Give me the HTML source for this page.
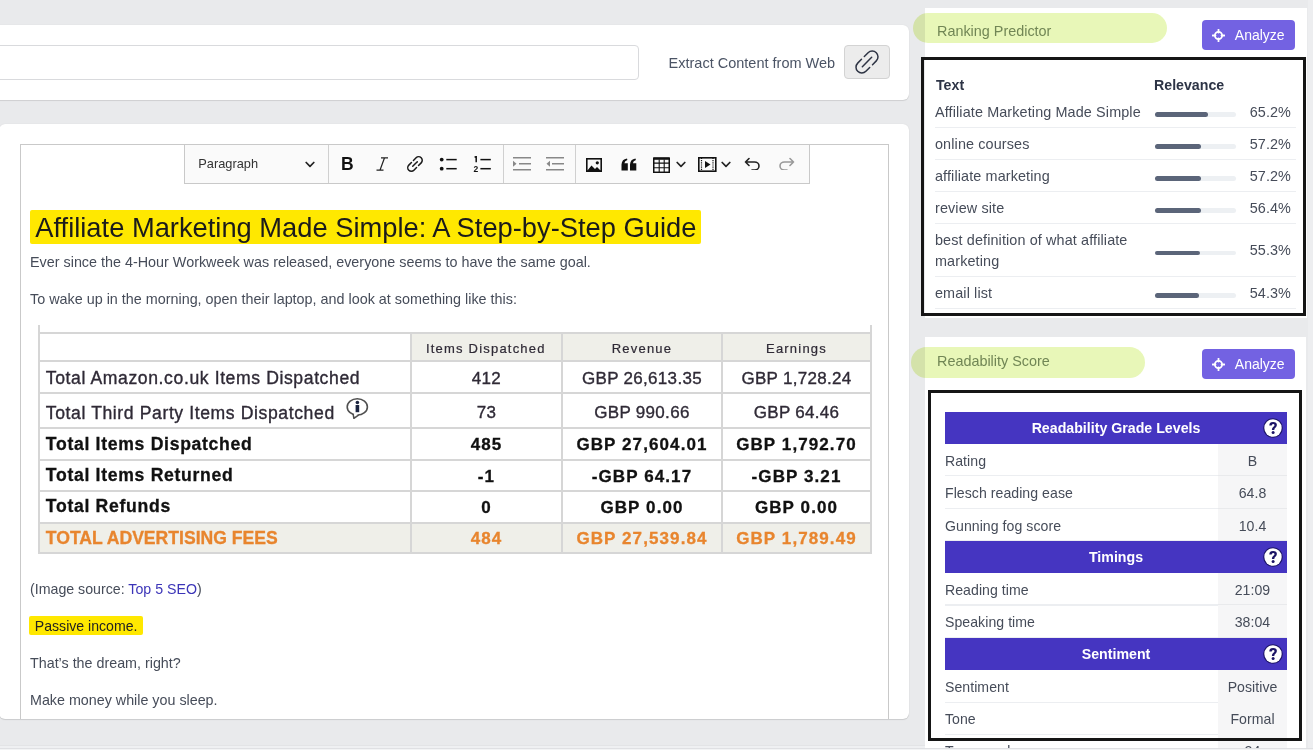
<!DOCTYPE html>
<html><head><meta charset="utf-8"><style>
html,body{margin:0;padding:0;}
body{width:1313px;height:750px;overflow:hidden;position:relative;background:#e9eaec;font-family:"Liberation Sans", sans-serif;}
.t{position:absolute;white-space:nowrap;}
.r{position:absolute;}
</style></head><body>
<div class="r" style="left:-10px;top:25px;width:918.8px;height:75px;background:#fff;border-radius:6px;box-shadow:0 0 1px rgba(0,0,0,.12),0 1px 1px rgba(0,0,0,.10);"></div>
<div class="r" style="left:-10px;top:45px;width:648.6px;height:34.8px;border:1px solid #d9dadd;border-radius:4px;box-sizing:border-box;background:#fff;"></div>
<div class="t" style="left:668.60px;top:56.33px;font-size:14.5px;line-height:14.5px;color:#4b5465;font-weight:400;">Extract Content from Web</div>
<div class="r" style="left:844px;top:45px;width:45.5px;height:33.5px;background:#ececec;border:1px solid #d3d3d3;border-radius:4px;box-sizing:border-box;"></div>
<svg class="r" style="left:854px;top:48.9px;" width="26" height="26" viewBox="0 0 26 26"><g transform="rotate(45 13 13)" fill="none" stroke="#2e3444" stroke-width="1.5" stroke-linecap="round"><path d="M7.2 11 V5.65 A5.8 5.8 0 0 1 18.8 5.65 V11"/><path d="M7.2 15 V20.35 A5.8 5.8 0 0 0 18.8 20.35 V15"/><path d="M13 6.4 V19.6"/></g></svg>
<div class="r" style="left:-1.5px;top:124px;width:910.3px;height:595px;background:#fff;border-radius:6px;box-shadow:0 0 1px rgba(0,0,0,.12),0 1px 1px rgba(0,0,0,.12);"></div>
<div class="r" style="left:20px;top:144px;width:869px;height:575px;border:1px solid #c9c9c9;border-bottom:none;box-sizing:border-box;"></div>
<div class="r" style="left:184px;top:144px;width:626px;height:39.5px;background:#fafafa;border:1px solid #c9c9c9;box-sizing:border-box;"></div>
<div class="r" style="left:328px;top:145px;width:1px;height:38px;background:#d0d0d0;"></div>
<div class="r" style="left:502.5px;top:145px;width:1px;height:38px;background:#d0d0d0;"></div>
<div class="r" style="left:574.5px;top:145px;width:1px;height:38px;background:#d0d0d0;"></div>
<div class="t" style="left:198.30px;top:157.66px;font-size:12.8px;line-height:12.8px;color:#333;font-weight:400;">Paragraph</div>
<svg class="r" style="left:305px;top:161px;" width="10" height="7" viewBox="0 0 10 7"><path d="M1.2 1.5 L5 5.3 L8.8 1.5" fill="none" stroke="#222" stroke-width="1.7" stroke-linecap="round" stroke-linejoin="round"/></svg>
<div class="t" style="left:341.00px;top:155.69px;font-size:17.5px;line-height:17.5px;color:#111;font-weight:700;">B</div>
<svg class="r" style="left:374.5px;top:157px;" width="14" height="14" viewBox="0 0 14 14"><path d="M6 0.9 H13 M1.5 13.1 H8.5 M9.5 0.9 L5 13.1" fill="none" stroke="#222" stroke-width="1.3"/></svg>
<svg class="r" style="left:405px;top:153.8px;" width="20" height="20" viewBox="0 0 20 20"><g transform="rotate(45 10 10)" fill="none" stroke="#1a1a1a" stroke-width="1.5" stroke-linecap="round"><path d="M6.4 8.6 V4.85 A3.6 3.6 0 0 1 13.6 4.85 V8.6"/><path d="M6.4 11.4 V15.15 A3.6 3.6 0 0 0 13.6 15.15 V11.4"/><path d="M10 6.8 V13.2"/></g></svg>
<svg class="r" style="left:439px;top:157px;" width="19" height="15" viewBox="0 0 19 15"><circle cx="2.7" cy="2.6" r="1.9" fill="#111"/><circle cx="2.7" cy="11.7" r="1.9" fill="#111"/><rect x="7.3" y="1.85" width="10.4" height="1.5" fill="#111"/><rect x="7.3" y="10.95" width="10.4" height="1.5" fill="#111"/></svg>
<svg class="r" style="left:473px;top:156px;" width="19" height="17" viewBox="0 0 19 17"><path d="M1.6 1.2 L3.2 0.6 V6.2" fill="none" stroke="#111" stroke-width="1.5"/><text x="0.6" y="16" font-family="Liberation Sans" font-size="8.5" font-weight="700" fill="#111">2</text><rect x="7.4" y="2.85" width="10.4" height="1.5" fill="#111"/><rect x="7.4" y="11.95" width="10.4" height="1.5" fill="#111"/></svg>
<svg class="r" style="left:513px;top:157px;" width="18" height="14" viewBox="0 0 18 14"><g fill="#888"><rect x="0" y="0" width="18" height="1.5"/><rect x="6" y="6" width="12" height="1.5"/><rect x="0" y="12" width="18" height="1.5"/><path d="M0 3.7 L3.5 6.75 L0 9.8Z"/></g></svg>
<svg class="r" style="left:546px;top:157px;" width="18" height="14" viewBox="0 0 18 14"><g fill="#888"><rect x="0" y="0" width="18" height="1.5"/><rect x="6" y="6" width="12" height="1.5"/><rect x="0" y="12" width="18" height="1.5"/><path d="M4 3.7 L0.5 6.75 L4 9.8Z"/></g></svg>
<svg class="r" style="left:586px;top:157.5px;" width="16" height="14" viewBox="0 0 16 14"><rect x="0.8" y="0.8" width="14.4" height="12.4" fill="none" stroke="#111" stroke-width="1.6"/><path d="M1 13 L5.5 7.5 L9 11 L11 9 L15 13Z" fill="#111"/><circle cx="11.3" cy="4.8" r="1.6" fill="#111"/></svg>
<svg class="r" style="left:620.5px;top:157.5px;" width="16" height="13" viewBox="0 0 16 13"><g fill="#111"><path d="M0.5 6.5 Q0.8 1.2 6 0.5 L6.4 2 Q3.6 2.8 3.4 5.2 H6.8 V12.5 H0.5Z"/><path d="M9 6.5 Q9.3 1.2 14.5 0.5 L14.9 2 Q12.1 2.8 11.9 5.2 H15.3 V12.5 H9Z"/></g></svg>
<svg class="r" style="left:652.5px;top:156.5px;" width="17" height="16" viewBox="0 0 17 16"><g fill="none" stroke="#111"><rect x="0.75" y="1.2" width="15.5" height="14.1" stroke-width="1.5"/><path d="M0.6 1.6 H16.4" stroke-width="2.4"/><path d="M0.6 6.1 H16.4 M0.6 10.7 H16.4 M6.2 2.5 V15.2 M11.2 2.5 V15.2" stroke-width="1.1"/></g></svg>
<svg class="r" style="left:675.5px;top:161px;" width="10" height="7" viewBox="0 0 10 7"><path d="M1.2 1.5 L5 5.3 L8.8 1.5" fill="none" stroke="#222" stroke-width="1.7" stroke-linecap="round" stroke-linejoin="round"/></svg>
<svg class="r" style="left:697.5px;top:156.5px;" width="19" height="15" viewBox="0 0 19 15"><rect x="0.8" y="0.8" width="17" height="13.4" fill="none" stroke="#111" stroke-width="1.6"/><path d="M3.5 0.8 V14.2 M15 0.8 V14.2" stroke="#111" stroke-width="1.2" stroke-dasharray="1.2 1"/><path d="M7 4 L12.5 7.5 L7 11Z" fill="#111"/></svg>
<svg class="r" style="left:720.5px;top:161px;" width="10" height="7" viewBox="0 0 10 7"><path d="M1.2 1.5 L5 5.3 L8.8 1.5" fill="none" stroke="#222" stroke-width="1.7" stroke-linecap="round" stroke-linejoin="round"/></svg>
<svg class="r" style="left:744px;top:157px;" width="17" height="13" viewBox="0 0 17 13"><path d="M5 1.5 L1.5 5 L5 8.5 M1.5 5 H10.5 a4.5 4 0 0 1 0 8 H8" fill="none" stroke="#222" stroke-width="1.6" stroke-linecap="round" stroke-linejoin="round"/></svg>
<svg class="r" style="left:777.5px;top:157px;" width="17" height="13" viewBox="0 0 17 13"><path d="M12 1.5 L15.5 5 L12 8.5 M15.5 5 H6.5 a4.5 4 0 0 0 0 8 H9" fill="none" stroke="#999" stroke-width="1.6" stroke-linecap="round" stroke-linejoin="round"/></svg>
<div class="r" style="left:29.5px;top:209.5px;width:671px;height:34px;background:#ffe800;border-radius:2px;"></div>
<div class="t" style="left:35.30px;top:213.99px;font-size:27.3px;line-height:27.3px;color:#1b1b1b;font-weight:400;">Affiliate Marketing Made Simple: A Step-by-Step Guide</div>
<div class="t" style="left:30.00px;top:255.34px;font-size:14.36px;line-height:14.36px;color:#464c59;font-weight:400;">Ever since the 4-Hour Workweek was released, everyone seems to have the same goal.</div>
<div class="t" style="left:30.00px;top:292.14px;font-size:14.36px;line-height:14.36px;color:#464c59;font-weight:400;">To wake up in the morning, open their laptop, and look at something like this:</div>
<div class="r" style="left:411px;top:333px;width:460px;height:28px;background:#efefe9;"></div>
<div class="r" style="left:39px;top:523px;width:832px;height:30px;background:#efefe9;"></div>
<div class="r" style="left:39px;top:332px;width:833px;height:2px;background:#d6d6d6;"></div>
<div class="r" style="left:39px;top:360px;width:833px;height:2px;background:#d6d6d6;"></div>
<div class="r" style="left:39px;top:392px;width:833px;height:2px;background:#d6d6d6;"></div>
<div class="r" style="left:39px;top:427px;width:833px;height:2px;background:#d6d6d6;"></div>
<div class="r" style="left:39px;top:459px;width:833px;height:2px;background:#d6d6d6;"></div>
<div class="r" style="left:39px;top:490px;width:833px;height:2px;background:#d6d6d6;"></div>
<div class="r" style="left:39px;top:522px;width:833px;height:2px;background:#d6d6d6;"></div>
<div class="r" style="left:39px;top:552px;width:833px;height:2px;background:#d6d6d6;"></div>
<div class="r" style="left:38px;top:333px;width:2px;height:221px;background:#d6d6d6;"></div>
<div class="r" style="left:410px;top:333px;width:2px;height:221px;background:#d6d6d6;"></div>
<div class="r" style="left:561px;top:333px;width:2px;height:221px;background:#d6d6d6;"></div>
<div class="r" style="left:721px;top:333px;width:2px;height:221px;background:#d6d6d6;"></div>
<div class="r" style="left:870px;top:333px;width:2px;height:221px;background:#d6d6d6;"></div>
<div class="r" style="left:38px;top:325px;width:2px;height:9px;background:#d6d6d6;"></div>
<div class="r" style="left:870px;top:325px;width:2px;height:9px;background:#d6d6d6;"></div>
<div class="t" style="left:426.00px;top:341.70px;font-size:13px;line-height:13px;color:#2f2a36;font-weight:400;letter-spacing:1.2px;-webkit-text-stroke:0.2px #2f2a36;">Items Dispatched</div>
<div class="t" style="left:562.00px;top:341.70px;font-size:13px;line-height:13px;color:#2f2a36;font-weight:400;letter-spacing:1.2px;width:160px;text-align:center;-webkit-text-stroke:0.2px #2f2a36;">Revenue</div>
<div class="t" style="left:722.00px;top:341.70px;font-size:13px;line-height:13px;color:#2f2a36;font-weight:400;letter-spacing:1.2px;width:149px;text-align:center;-webkit-text-stroke:0.2px #2f2a36;">Earnings</div>
<div class="t" style="left:45.80px;top:369.50px;font-size:17.6px;line-height:17.6px;color:#2f2a36;font-weight:400;letter-spacing:0.6px;-webkit-text-stroke:0.35px #2f2a36;">Total Amazon.co.uk Items Dispatched</div>
<div class="t" style="left:411.00px;top:370.01px;font-size:17px;line-height:17px;color:#2f2a36;font-weight:400;letter-spacing:0.3px;width:151px;text-align:center;-webkit-text-stroke:0.35px #2f2a36;">412</div>
<div class="t" style="left:562.00px;top:370.01px;font-size:17px;line-height:17px;color:#2f2a36;font-weight:400;letter-spacing:0.3px;width:160px;text-align:center;-webkit-text-stroke:0.35px #2f2a36;">GBP 26,613.35</div>
<div class="t" style="left:722.00px;top:370.01px;font-size:17px;line-height:17px;color:#2f2a36;font-weight:400;letter-spacing:0.3px;width:149px;text-align:center;-webkit-text-stroke:0.35px #2f2a36;">GBP 1,728.24</div>
<div class="t" style="left:45.80px;top:405.30px;font-size:17.6px;line-height:17.6px;color:#2f2a36;font-weight:400;letter-spacing:0.6px;-webkit-text-stroke:0.35px #2f2a36;">Total Third Party Items Dispatched</div>
<div class="t" style="left:411.00px;top:404.11px;font-size:17px;line-height:17px;color:#2f2a36;font-weight:400;letter-spacing:0.3px;width:151px;text-align:center;-webkit-text-stroke:0.35px #2f2a36;">73</div>
<div class="t" style="left:562.00px;top:404.11px;font-size:17px;line-height:17px;color:#2f2a36;font-weight:400;letter-spacing:0.3px;width:160px;text-align:center;-webkit-text-stroke:0.35px #2f2a36;">GBP 990.66</div>
<div class="t" style="left:722.00px;top:404.11px;font-size:17px;line-height:17px;color:#2f2a36;font-weight:400;letter-spacing:0.3px;width:149px;text-align:center;-webkit-text-stroke:0.35px #2f2a36;">GBP 64.46</div>
<div class="t" style="left:45.80px;top:435.60px;font-size:17.6px;line-height:17.6px;color:#111;font-weight:700;letter-spacing:0.7px;-webkit-text-stroke:0.3px #111;">Total Items Dispatched</div>
<div class="t" style="left:411.00px;top:436.11px;font-size:17px;line-height:17px;color:#111;font-weight:700;letter-spacing:1.1px;width:151px;text-align:center;-webkit-text-stroke:0.3px #111;">485</div>
<div class="t" style="left:562.00px;top:436.11px;font-size:17px;line-height:17px;color:#111;font-weight:700;letter-spacing:1.1px;width:160px;text-align:center;-webkit-text-stroke:0.3px #111;">GBP 27,604.01</div>
<div class="t" style="left:722.00px;top:436.11px;font-size:17px;line-height:17px;color:#111;font-weight:700;letter-spacing:1.1px;width:149px;text-align:center;-webkit-text-stroke:0.3px #111;">GBP 1,792.70</div>
<div class="t" style="left:45.80px;top:467.10px;font-size:17.6px;line-height:17.6px;color:#111;font-weight:700;letter-spacing:0.7px;-webkit-text-stroke:0.3px #111;">Total Items Returned</div>
<div class="t" style="left:411.00px;top:467.61px;font-size:17px;line-height:17px;color:#111;font-weight:700;letter-spacing:1.1px;width:151px;text-align:center;-webkit-text-stroke:0.3px #111;">-1</div>
<div class="t" style="left:562.00px;top:467.61px;font-size:17px;line-height:17px;color:#111;font-weight:700;letter-spacing:1.1px;width:160px;text-align:center;-webkit-text-stroke:0.3px #111;">-GBP 64.17</div>
<div class="t" style="left:722.00px;top:467.61px;font-size:17px;line-height:17px;color:#111;font-weight:700;letter-spacing:1.1px;width:149px;text-align:center;-webkit-text-stroke:0.3px #111;">-GBP 3.21</div>
<div class="t" style="left:45.80px;top:498.10px;font-size:17.6px;line-height:17.6px;color:#111;font-weight:700;letter-spacing:0.7px;-webkit-text-stroke:0.3px #111;">Total Refunds</div>
<div class="t" style="left:411.00px;top:498.61px;font-size:17px;line-height:17px;color:#111;font-weight:700;letter-spacing:1.1px;width:151px;text-align:center;-webkit-text-stroke:0.3px #111;">0</div>
<div class="t" style="left:562.00px;top:498.61px;font-size:17px;line-height:17px;color:#111;font-weight:700;letter-spacing:1.1px;width:160px;text-align:center;-webkit-text-stroke:0.3px #111;">GBP 0.00</div>
<div class="t" style="left:722.00px;top:498.61px;font-size:17px;line-height:17px;color:#111;font-weight:700;letter-spacing:1.1px;width:149px;text-align:center;-webkit-text-stroke:0.3px #111;">GBP 0.00</div>
<div class="t" style="left:45.80px;top:529.60px;font-size:17.6px;line-height:17.6px;color:#e8852e;font-weight:700;-webkit-text-stroke:0.3px #e8852e;">TOTAL ADVERTISING FEES</div>
<div class="t" style="left:411.00px;top:530.11px;font-size:17px;line-height:17px;color:#e8852e;font-weight:700;letter-spacing:1.1px;width:151px;text-align:center;-webkit-text-stroke:0.3px #e8852e;">484</div>
<div class="t" style="left:562.00px;top:530.11px;font-size:17px;line-height:17px;color:#e8852e;font-weight:700;letter-spacing:1.1px;width:160px;text-align:center;-webkit-text-stroke:0.3px #e8852e;">GBP 27,539.84</div>
<div class="t" style="left:722.00px;top:530.11px;font-size:17px;line-height:17px;color:#e8852e;font-weight:700;letter-spacing:1.1px;width:149px;text-align:center;-webkit-text-stroke:0.3px #e8852e;">GBP 1,789.49</div>
<svg class="r" style="left:345px;top:396px;" width="25" height="24" viewBox="0 0 25 24"><ellipse cx="12.3" cy="10.9" rx="10.1" ry="8.1" fill="#fff" stroke="#505050" stroke-width="1.6"/><path d="M8.2 17.9 L8.9 22.3 L13.8 18.8" fill="#fff" stroke="#505050" stroke-width="1.6" stroke-linejoin="round"/><path d="M8.9 17.2 L13.6 17.6 L9.6 20.2Z" fill="#fff"/><circle cx="12.4" cy="6.5" r="1.8" fill="#1b2440"/><rect x="10.6" y="9" width="3.6" height="7.2" fill="#1b2440"/></svg>
<div class="t" style="left:30.00px;top:581.98px;font-size:14.2px;line-height:14.2px;color:#464c59;font-weight:400;">(Image source: <span style="color:#3c35b8">Top 5 SEO</span>)</div>
<div class="r" style="left:29.3px;top:616px;width:114px;height:18.5px;background:#ffe800;border-radius:2px;"></div>
<div class="t" style="left:34.80px;top:619.26px;font-size:14.1px;line-height:14.1px;color:#222;font-weight:400;">Passive income.</div>
<div class="t" style="left:30.00px;top:655.90px;font-size:14.3px;line-height:14.3px;color:#464c59;font-weight:400;">That’s the dream, right?</div>
<div class="t" style="left:30.00px;top:692.90px;font-size:14.3px;line-height:14.3px;color:#464c59;font-weight:400;">Make money while you sleep.</div>
<div class="r" style="left:925px;top:8px;width:381.5px;height:310px;background:#fff;"></div>
<div class="r" style="left:912.6px;top:12.6px;width:254.4px;height:30.8px;background:#e8f7b8;border-radius:16px;filter:blur(0.6px);mix-blend-mode:multiply;"></div>
<div class="t" style="left:937.00px;top:24.01px;font-size:14.4px;line-height:14.4px;color:#718655;font-weight:400;">Ranking Predictor</div>
<div class="r" style="left:1202px;top:20.2px;width:93px;height:29.6px;background:#7362e2;border-radius:4px;"></div>
<svg class="r" style="left:1211.5px;top:28.7px;" width="13" height="13" viewBox="0 0 13 13"><circle cx="6.5" cy="6.5" r="3.6" fill="none" stroke="#fff" stroke-width="1.8"/><path d="M6.5 0.5 V3.5 M6.5 9.5 V12.5 M0.5 6.5 H3.5 M9.5 6.5 H12.5" stroke="#fff" stroke-width="1.8" stroke-linecap="round"/></svg>
<div class="t" style="left:1234.80px;top:28.35px;font-size:14px;line-height:14px;color:#fff;font-weight:400;">Analyze</div>
<div class="r" style="left:920.5px;top:57px;width:385.5px;height:259px;border:3.6px solid #151515;box-sizing:border-box;"></div>
<div class="t" style="left:936.00px;top:77.58px;font-size:14.2px;line-height:14.2px;color:#2d3446;font-weight:700;">Text</div>
<div class="t" style="left:1154.00px;top:77.58px;font-size:14.2px;line-height:14.2px;color:#2d3446;font-weight:700;">Relevance</div>
<div class="t" style="left:935.00px;top:105.41px;font-size:14.4px;line-height:14.4px;color:#464c59;font-weight:400;letter-spacing:0.12px;">Affiliate Marketing Made Simple</div>
<div class="r" style="left:1155px;top:112.2px;width:81px;height:4.4px;background:#edf0f3;border-radius:3px;"></div>
<div class="r" style="left:1155px;top:112.2px;width:52.8px;height:4.4px;background:#5b6579;border-radius:3px;"></div>
<div class="t" style="left:1249.70px;top:105.11px;font-size:14.4px;line-height:14.4px;color:#464c59;font-weight:400;letter-spacing:0.1px;">65.2%</div>
<div class="r" style="left:935px;top:126.80000000000001px;width:361px;height:1.2px;background:#eceef1;"></div>
<div class="t" style="left:935.00px;top:137.41px;font-size:14.4px;line-height:14.4px;color:#464c59;font-weight:400;letter-spacing:0.12px;">online courses</div>
<div class="r" style="left:1155px;top:144.20000000000002px;width:81px;height:4.4px;background:#edf0f3;border-radius:3px;"></div>
<div class="r" style="left:1155px;top:144.20000000000002px;width:46.3px;height:4.4px;background:#5b6579;border-radius:3px;"></div>
<div class="t" style="left:1249.70px;top:137.11px;font-size:14.4px;line-height:14.4px;color:#464c59;font-weight:400;letter-spacing:0.1px;">57.2%</div>
<div class="r" style="left:935px;top:158.8px;width:361px;height:1.2px;background:#eceef1;"></div>
<div class="t" style="left:935.00px;top:169.41px;font-size:14.4px;line-height:14.4px;color:#464c59;font-weight:400;letter-spacing:0.12px;">affiliate marketing</div>
<div class="r" style="left:1155px;top:176.20000000000002px;width:81px;height:4.4px;background:#edf0f3;border-radius:3px;"></div>
<div class="r" style="left:1155px;top:176.20000000000002px;width:46.3px;height:4.4px;background:#5b6579;border-radius:3px;"></div>
<div class="t" style="left:1249.70px;top:169.11px;font-size:14.4px;line-height:14.4px;color:#464c59;font-weight:400;letter-spacing:0.1px;">57.2%</div>
<div class="r" style="left:935px;top:190.8px;width:361px;height:1.2px;background:#eceef1;"></div>
<div class="t" style="left:935.00px;top:201.41px;font-size:14.4px;line-height:14.4px;color:#464c59;font-weight:400;letter-spacing:0.12px;">review site</div>
<div class="r" style="left:1155px;top:208.20000000000002px;width:81px;height:4.4px;background:#edf0f3;border-radius:3px;"></div>
<div class="r" style="left:1155px;top:208.20000000000002px;width:45.7px;height:4.4px;background:#5b6579;border-radius:3px;"></div>
<div class="t" style="left:1249.70px;top:201.11px;font-size:14.4px;line-height:14.4px;color:#464c59;font-weight:400;letter-spacing:0.1px;">56.4%</div>
<div class="r" style="left:935px;top:222.8px;width:361px;height:1.2px;background:#eceef1;"></div>
<div class="t" style="left:935.00px;top:232.81px;font-size:14.4px;line-height:14.4px;color:#464c59;font-weight:400;letter-spacing:0.12px;">best definition of what affiliate</div>
<div class="t" style="left:935.00px;top:253.61px;font-size:14.4px;line-height:14.4px;color:#464c59;font-weight:400;letter-spacing:0.12px;">marketing</div>
<div class="r" style="left:1155px;top:250.70000000000002px;width:81px;height:4.4px;background:#edf0f3;border-radius:3px;"></div>
<div class="r" style="left:1155px;top:250.70000000000002px;width:44.8px;height:4.4px;background:#5b6579;border-radius:3px;"></div>
<div class="t" style="left:1249.70px;top:242.71px;font-size:14.4px;line-height:14.4px;color:#464c59;font-weight:400;letter-spacing:0.1px;">55.3%</div>
<div class="r" style="left:935px;top:275.79999999999995px;width:361px;height:1.2px;background:#eceef1;"></div>
<div class="t" style="left:935.00px;top:286.41px;font-size:14.4px;line-height:14.4px;color:#464c59;font-weight:400;letter-spacing:0.12px;">email list</div>
<div class="r" style="left:1155px;top:293.2px;width:81px;height:4.4px;background:#edf0f3;border-radius:3px;"></div>
<div class="r" style="left:1155px;top:293.2px;width:44.0px;height:4.4px;background:#5b6579;border-radius:3px;"></div>
<div class="t" style="left:1249.70px;top:286.11px;font-size:14.4px;line-height:14.4px;color:#464c59;font-weight:400;letter-spacing:0.1px;">54.3%</div>
<div class="r" style="left:935px;top:307.79999999999995px;width:361px;height:1.2px;background:#eceef1;"></div>
<div class="r" style="left:925px;top:337.2px;width:381px;height:420px;background:#fff;"></div>
<div class="r" style="left:911px;top:347px;width:234px;height:31.3px;background:#e8f7b8;border-radius:16px;filter:blur(0.6px);mix-blend-mode:multiply;"></div>
<div class="t" style="left:937.00px;top:353.61px;font-size:14.4px;line-height:14.4px;color:#718655;font-weight:400;">Readability Score</div>
<div class="r" style="left:1202px;top:349.3px;width:93px;height:29.6px;background:#7362e2;border-radius:4px;"></div>
<svg class="r" style="left:1211.5px;top:357.8px;" width="13" height="13" viewBox="0 0 13 13"><circle cx="6.5" cy="6.5" r="3.6" fill="none" stroke="#fff" stroke-width="1.8"/><path d="M6.5 0.5 V3.5 M6.5 9.5 V12.5 M0.5 6.5 H3.5 M9.5 6.5 H12.5" stroke="#fff" stroke-width="1.8" stroke-linecap="round"/></svg>
<div class="t" style="left:1234.80px;top:357.45px;font-size:14px;line-height:14px;color:#fff;font-weight:400;">Analyze</div>
<div class="r" style="left:945px;top:412.3px;width:342px;height:31.6px;background:#4535c1;"></div>
<div class="t" style="left:945.00px;top:421.28px;font-size:14.2px;line-height:14.2px;color:#fff;font-weight:700;width:342px;text-align:center;">Readability Grade Levels</div>
<svg class="r" style="left:1262.5px;top:418.3px;" width="20" height="20" viewBox="0 0 20 20"><circle cx="10" cy="10" r="9.8" fill="#1c1466"/><circle cx="10" cy="10" r="8.7" fill="#fff"/><path d="M6.3 7.5 Q6.3 3.9 10.1 3.9 Q13.9 3.9 13.9 7.1 Q13.9 8.9 12.2 9.9 Q11.3 10.5 11.3 11.9 H8.9 Q8.8 9.6 10.4 8.7 Q11.5 8.1 11.5 7.2 Q11.5 6 10.1 6 Q8.7 6 8.7 7.5Z" fill="#1c1466"/><circle cx="10.1" cy="14.6" r="1.5" fill="#1c1466"/></svg>
<div class="r" style="left:1218px;top:443.6px;width:69px;height:32.3px;background:#f6f6f7;"></div>
<div class="t" style="left:945.00px;top:453.86px;font-size:14.1px;line-height:14.1px;color:#464c59;font-weight:400;letter-spacing:0.05px;">Rating</div>
<div class="t" style="left:1218.00px;top:453.86px;font-size:14.1px;line-height:14.1px;color:#464c59;font-weight:400;letter-spacing:0.05px;width:69px;text-align:center;">B</div>
<div class="r" style="left:945px;top:475.3px;width:342px;height:1.2px;background:#eceef1;"></div>
<div class="r" style="left:1218px;top:475.3px;width:69px;height:1.2px;background:#e9eaec;"></div>
<div class="r" style="left:1218px;top:476.2px;width:69px;height:32.3px;background:#f6f6f7;"></div>
<div class="t" style="left:945.00px;top:486.46px;font-size:14.1px;line-height:14.1px;color:#464c59;font-weight:400;letter-spacing:0.05px;">Flesch reading ease</div>
<div class="t" style="left:1218.00px;top:486.46px;font-size:14.1px;line-height:14.1px;color:#464c59;font-weight:400;letter-spacing:0.05px;width:69px;text-align:center;">64.8</div>
<div class="r" style="left:945px;top:507.9px;width:342px;height:1.2px;background:#eceef1;"></div>
<div class="r" style="left:1218px;top:507.9px;width:69px;height:1.2px;background:#e9eaec;"></div>
<div class="r" style="left:1218px;top:508.6px;width:69px;height:32.3px;background:#f6f6f7;"></div>
<div class="t" style="left:945.00px;top:518.86px;font-size:14.1px;line-height:14.1px;color:#464c59;font-weight:400;letter-spacing:0.05px;">Gunning fog score</div>
<div class="t" style="left:1218.00px;top:518.86px;font-size:14.1px;line-height:14.1px;color:#464c59;font-weight:400;letter-spacing:0.05px;width:69px;text-align:center;">10.4</div>
<div class="r" style="left:945px;top:540.3px;width:342px;height:1.2px;background:#eceef1;"></div>
<div class="r" style="left:1218px;top:540.3px;width:69px;height:1.2px;background:#e9eaec;"></div>
<div class="r" style="left:945px;top:541.1px;width:342px;height:31.6px;background:#4535c1;"></div>
<div class="t" style="left:945.00px;top:550.08px;font-size:14.2px;line-height:14.2px;color:#fff;font-weight:700;width:342px;text-align:center;">Timings</div>
<svg class="r" style="left:1262.5px;top:547.1px;" width="20" height="20" viewBox="0 0 20 20"><circle cx="10" cy="10" r="9.8" fill="#1c1466"/><circle cx="10" cy="10" r="8.7" fill="#fff"/><path d="M6.3 7.5 Q6.3 3.9 10.1 3.9 Q13.9 3.9 13.9 7.1 Q13.9 8.9 12.2 9.9 Q11.3 10.5 11.3 11.9 H8.9 Q8.8 9.6 10.4 8.7 Q11.5 8.1 11.5 7.2 Q11.5 6 10.1 6 Q8.7 6 8.7 7.5Z" fill="#1c1466"/><circle cx="10.1" cy="14.6" r="1.5" fill="#1c1466"/></svg>
<div class="r" style="left:1218px;top:572.7px;width:69px;height:32.3px;background:#f6f6f7;"></div>
<div class="t" style="left:945.00px;top:582.96px;font-size:14.1px;line-height:14.1px;color:#464c59;font-weight:400;letter-spacing:0.05px;">Reading time</div>
<div class="t" style="left:1218.00px;top:582.96px;font-size:14.1px;line-height:14.1px;color:#464c59;font-weight:400;letter-spacing:0.05px;width:69px;text-align:center;">21:09</div>
<div class="r" style="left:945px;top:604.4px;width:342px;height:1.2px;background:#eceef1;"></div>
<div class="r" style="left:1218px;top:604.4px;width:69px;height:1.2px;background:#e9eaec;"></div>
<div class="r" style="left:1218px;top:605.2px;width:69px;height:32.3px;background:#f6f6f7;"></div>
<div class="t" style="left:945.00px;top:615.46px;font-size:14.1px;line-height:14.1px;color:#464c59;font-weight:400;letter-spacing:0.05px;">Speaking time</div>
<div class="t" style="left:1218.00px;top:615.46px;font-size:14.1px;line-height:14.1px;color:#464c59;font-weight:400;letter-spacing:0.05px;width:69px;text-align:center;">38:04</div>
<div class="r" style="left:945px;top:636.9px;width:342px;height:1.2px;background:#eceef1;"></div>
<div class="r" style="left:1218px;top:636.9px;width:69px;height:1.2px;background:#e9eaec;"></div>
<div class="r" style="left:945px;top:638.2px;width:342px;height:31.6px;background:#4535c1;"></div>
<div class="t" style="left:945.00px;top:647.18px;font-size:14.2px;line-height:14.2px;color:#fff;font-weight:700;width:342px;text-align:center;">Sentiment</div>
<svg class="r" style="left:1262.5px;top:644.2px;" width="20" height="20" viewBox="0 0 20 20"><circle cx="10" cy="10" r="9.8" fill="#1c1466"/><circle cx="10" cy="10" r="8.7" fill="#fff"/><path d="M6.3 7.5 Q6.3 3.9 10.1 3.9 Q13.9 3.9 13.9 7.1 Q13.9 8.9 12.2 9.9 Q11.3 10.5 11.3 11.9 H8.9 Q8.8 9.6 10.4 8.7 Q11.5 8.1 11.5 7.2 Q11.5 6 10.1 6 Q8.7 6 8.7 7.5Z" fill="#1c1466"/><circle cx="10.1" cy="14.6" r="1.5" fill="#1c1466"/></svg>
<div class="r" style="left:1218px;top:669.8px;width:69px;height:32.3px;background:#f6f6f7;"></div>
<div class="t" style="left:945.00px;top:680.06px;font-size:14.1px;line-height:14.1px;color:#464c59;font-weight:400;letter-spacing:0.05px;">Sentiment</div>
<div class="t" style="left:1218.00px;top:680.06px;font-size:14.1px;line-height:14.1px;color:#464c59;font-weight:400;letter-spacing:0.05px;width:69px;text-align:center;">Positive</div>
<div class="r" style="left:945px;top:701.4999999999999px;width:342px;height:1.2px;background:#eceef1;"></div>
<div class="r" style="left:1218px;top:701.4999999999999px;width:69px;height:1.2px;background:#e9eaec;"></div>
<div class="r" style="left:1218px;top:702.2px;width:69px;height:32.3px;background:#f6f6f7;"></div>
<div class="t" style="left:945.00px;top:712.46px;font-size:14.1px;line-height:14.1px;color:#464c59;font-weight:400;letter-spacing:0.05px;">Tone</div>
<div class="t" style="left:1218.00px;top:712.46px;font-size:14.1px;line-height:14.1px;color:#464c59;font-weight:400;letter-spacing:0.05px;width:69px;text-align:center;">Formal</div>
<div class="r" style="left:945px;top:733.9px;width:342px;height:1.2px;background:#eceef1;"></div>
<div class="r" style="left:1218px;top:733.9px;width:69px;height:1.2px;background:#e9eaec;"></div>
<div class="r" style="left:1218px;top:733.3px;width:69px;height:32.3px;background:#f6f6f7;"></div>
<div class="t" style="left:945.00px;top:743.56px;font-size:14.1px;line-height:14.1px;color:#464c59;font-weight:400;letter-spacing:0.05px;">Tone words</div>
<div class="t" style="left:1218.00px;top:743.56px;font-size:14.1px;line-height:14.1px;color:#464c59;font-weight:400;letter-spacing:0.05px;width:69px;text-align:center;">24</div>
<div class="r" style="left:945px;top:764.9999999999999px;width:342px;height:1.2px;background:#eceef1;"></div>
<div class="r" style="left:1218px;top:764.9999999999999px;width:69px;height:1.2px;background:#e9eaec;"></div>
<div class="r" style="left:927.5px;top:390px;width:374.2px;height:350.6px;border:3.6px solid #151515;box-sizing:border-box;"></div>
<div class="r" style="left:1307.5px;top:0px;width:6px;height:750px;background:#edeef0;"></div>
<div class="r" style="left:0px;top:745px;width:925px;height:1px;background:#e3e4e6;"></div>
<div class="r" style="left:0px;top:746px;width:925px;height:1.5px;background:#eff0f2;"></div>
<div class="r" style="left:0px;top:747.8px;width:1313px;height:1px;background:#dfe0e3;"></div>
<div class="r" style="left:0px;top:748.8px;width:1313px;height:2px;background:#f3f4f5;"></div>
</body></html>
